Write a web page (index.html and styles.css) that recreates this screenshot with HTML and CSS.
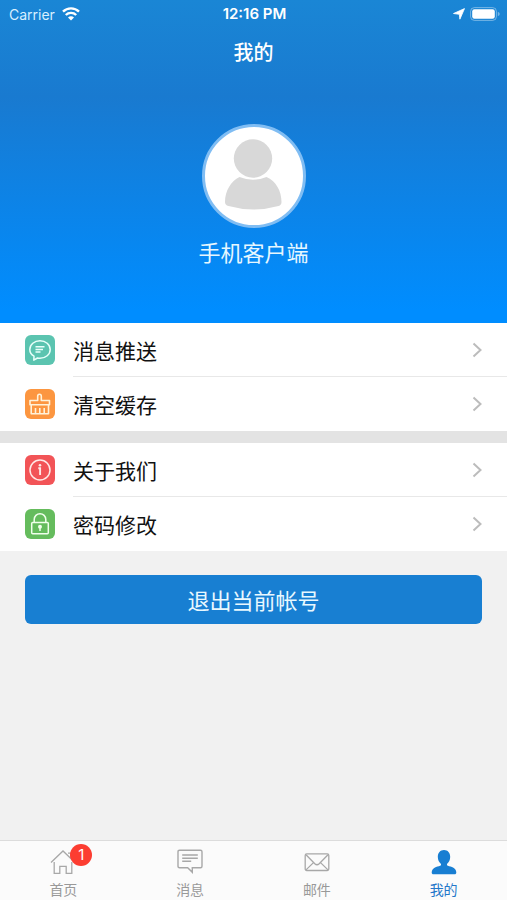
FILE: index.html
```html
<!DOCTYPE html>
<html lang="zh-CN">
<head>
<meta charset="utf-8">
<meta name="viewport" content="width=device-width, initial-scale=1">
<title>我的</title>
<link rel="stylesheet" href="styles.css">
</head>
<body>
<div class="app">
  <header class="hero">
    <div class="status">
      <div class="status-left">
        <span>Carrier</span>
        <svg width="18" height="14" viewBox="0 0 18 14" fill="none" stroke="#fff" stroke-width="2.4" aria-hidden="true">
          <path d="M1 4.700a11.400 11.400 0 0 1 16 0"/>
          <path d="M3.800 8a7.400 7.400 0 0 1 10.400 0"/>
          <path d="M6 10.500a4.200 4.200 0 0 1 6 0L9 13.600z" fill="#fff" stroke="none"/>
        </svg>
      </div>
      <span class="status-time">12:16 PM</span>
      <div class="status-right">
        <svg width="12" height="12" viewBox="0 0 12 12" fill="#fff" stroke="#fff" stroke-width=".8" stroke-linejoin="round" aria-hidden="true"><path d="M11.500.6 6.900 11.200 6.300 6.300.5 5.500z"/></svg>
        <svg width="30" height="14" viewBox="0 0 30 14" aria-hidden="true">
          <rect x=".6" y=".6" width="25.800" height="12.800" rx="3.800" fill="none" stroke="#fff" stroke-opacity=".4"/>
          <rect x="2.200" y="2.200" width="22.600" height="9.600" rx="2.200" fill="#fff"/>
          <path d="M27.800 4.800q2 .8 2 2.200t-2 2.200z" fill="#fff" fill-opacity=".4"/>
        </svg>
      </div>
    </div>
    <h1 class="title">我的</h1>
    <svg class="avatar" width="104" height="104" viewBox="0 0 104 104" role="img" aria-label="头像">
      <circle cx="52" cy="52" r="50.5" fill="#fff" stroke="#80bdf3" stroke-width="3"/>
      <circle cx="51" cy="34.500" r="19.200" fill="#d8d8d8"/>
      <path d="M37.500 53q13.500 5.500 27 0C74 57 79.500 67 79.500 78q0 3-3 4-25 7-50 0-3.500-1-3.500-4C23 67 29 57 37.500 53z" fill="#d8d8d8"/>
    </svg>
    <p class="name">手机客户端</p>
  </header>

  <main class="content">
    <nav class="group">
      <a class="row" href="#push">
        <svg class="row-icon" viewBox="0 0 30 30" aria-hidden="true">
          <rect width="30" height="30" rx="6" fill="#5bc4b0"/>
          <path d="M9 21.200C6.300 19.700 4.800 17.300 4.800 14.500c0-5 4.600-8.800 10.200-8.800s10.200 3.800 10.200 8.800-4.600 8.800-10.200 8.800c-.9 0-1.700-.1-2.500-.3L8.800 25.200z" fill="none" stroke="#e8fffa" stroke-width="1.500" stroke-linejoin="round"/>
          <path d="M10.500 11.700h9M10.500 14.400h7.500M10.500 17h5" stroke="#e8fffa" stroke-width="1.500"/>
        </svg>
        <span class="row-body"><span>消息推送</span><svg class="chevron" viewBox="0 0 10 16" aria-hidden="true"><path d="m1.500 1.500 7 6.500-7 6.500"/></svg></span>
      </a>
      <a class="row" href="#cache">
        <svg class="row-icon" viewBox="0 0 30 30" aria-hidden="true">
          <rect width="30" height="30" rx="6" fill="#fc9640"/>
          <path d="M12.700 11.500V7.200q0-2 1.800-2t1.800 2v4.300h8.200v4.300H5v-4.300zM6.200 15.800v8.900h17.300v-8.900M10.500 24.500v-5.500M14.800 24.500v-5.500M19.200 24.500v-5.500" fill="none" stroke="#fff2d8" stroke-width="1.600" stroke-linejoin="round"/>
        </svg>
        <span class="row-body"><span>清空缓存</span><svg class="chevron" viewBox="0 0 10 16" aria-hidden="true"><path d="m1.500 1.500 7 6.500-7 6.500"/></svg></span>
      </a>
    </nav>
    <nav class="group">
      <a class="row" href="#about">
        <svg class="row-icon" viewBox="0 0 30 30" aria-hidden="true">
          <rect width="30" height="30" rx="6" fill="#f25457"/>
          <circle cx="15" cy="15" r="10" fill="none" stroke="#ffe9e6" stroke-width="1.500"/>
          <circle cx="15" cy="10.200" r="1.300" fill="#ffe9e6"/>
          <path d="M13.300 13.300h1.800v6.700" fill="none" stroke="#ffe9e6" stroke-width="1.900"/>
        </svg>
        <span class="row-body"><span>关于我们</span><svg class="chevron" viewBox="0 0 10 16" aria-hidden="true"><path d="m1.500 1.500 7 6.500-7 6.500"/></svg></span>
      </a>
      <a class="row" href="#password">
        <svg class="row-icon" viewBox="0 0 30 30" aria-hidden="true">
          <rect width="30" height="30" rx="6" fill="#65bc5d"/>
          <rect x="6.700" y="13.500" width="16.600" height="11.200" rx="1" fill="none" stroke="#f0ffeb" stroke-width="1.500"/>
          <path d="M9.200 13.500v-3a5.800 5.800 0 0 1 11.600 0v3" fill="none" stroke="#f0ffeb" stroke-width="1.500"/>
          <circle cx="15" cy="17.700" r="2" fill="#f0ffeb"/><path d="M15 18v4" stroke="#f0ffeb" stroke-width="1.500"/>
        </svg>
        <span class="row-body"><span>密码修改</span><svg class="chevron" viewBox="0 0 10 16" aria-hidden="true"><path d="m1.500 1.500 7 6.500-7 6.500"/></svg></span>
      </a>
    </nav>
    <button class="logout" type="button">退出当前帐号</button>
  </main>

  <nav class="tabs">
    <a class="tab" href="#home">
      <span class="tab-icon">
        <svg width="26" height="26" viewBox="0 0 26 26" fill="none" stroke="#a8a8a8" stroke-width="1.300" aria-hidden="true">
          <path d="M1 13.500 13 2l12 11.500M18 4.200h3v5.200M4.200 13v11.300h5.600v-7h6.400v7h5.600V13"/>
        </svg>
        <span class="badge">1</span>
      </span>
      <span>首页</span>
    </a>
    <a class="tab" href="#messages">
      <span class="tab-icon">
        <svg width="26" height="26" viewBox="0 0 26 26" fill="none" stroke="#a8a8a8" stroke-width="1.400" aria-hidden="true">
          <path d="M2.500 1.200h21q1.500 0 1.500 1.500v14.500q0 1.500-1.500 1.500h-8.200v4.600l-4.600-4.600H2.500Q1 18.700 1 17.200V2.700q0-1.500 1.500-1.500zM5.200 6h15.600M5.200 9.200h15.600M5.200 12.200h9"/>
        </svg>
      </span>
      <span>消息</span>
    </a>
    <a class="tab" href="#mail">
      <span class="tab-icon">
        <svg width="26" height="26" viewBox="0 0 26 26" fill="none" stroke="#a8a8a8" stroke-width="1.300" aria-hidden="true">
          <rect x="1.200" y="4.900" width="23.600" height="16.600" rx="1.500"/>
          <path d="m2 5.700 8.800 9q2.200 2 4.400 0L24 5.700M2 20.900l7.500-7.300M24 20.900l-7.500-7.300"/>
        </svg>
      </span>
      <span>邮件</span>
    </a>
    <a class="tab tab-active" href="#me" aria-current="page">
      <span class="tab-icon">
        <svg width="26" height="26" viewBox="0 0 26 26" fill="#187ed2" aria-hidden="true">
          <path d="M13 1c3.800 0 6.200 2.900 6.200 6.800 0 3-1.300 5.700-3.200 7.100v1.300c1 1 3 1.100 5 1.800 2.800 1 4.300 2.900 4.300 5.500 0 1.200-.6 1.800-1.800 1.800h-21C1.300 25.300.7 24.700.7 23.500.7 20.900 2.200 19 5 18c2-.7 4-.8 5-1.800v-1.300C8.100 13.500 6.800 10.800 6.800 7.800 6.800 3.900 9.200 1 13 1z"/>
        </svg>
      </span>
      <span>我的</span>
    </a>
  </nav>
</div>
</body>
</html>
```
FILE: styles.css
```css
* {
  box-sizing: border-box;
}

body {
  margin: 0;
  background: #f1f1f1;
  color: #111;
  font-family: Inter, "Noto Sans CJK SC", sans-serif;
}

a {
  color: inherit;
  text-decoration: none;
}

svg {
  display: block;
  flex: none;
}

.app {
  display: flex;
  flex-direction: column;
  min-height: 100vh;
}

.hero {
  display: flex;
  flex-direction: column;
  align-items: center;
  padding-bottom: 53px;
  background: linear-gradient(#1a86d5 0, #197ad0 30%, #008dff 96%);
  color: #fff;
}

.status {
  display: grid;
  grid-template-columns: 1fr auto 1fr;
  align-items: center;
  width: 100%;
  height: 28px;
  padding: 0 7px 0 9px;
  font-size: 14px;
}

.status-left,
.status-right {
  display: flex;
  align-items: center;
  gap: 5px;
}

.status-left {
  gap: 7px;
  color: #d8efff;
}

.status-right {
  justify-content: flex-end;
}

.status-time {
  font-size: 15px;
  line-height: 20px;
  font-weight: 600;
}

.title {
  margin: 0;
  font-size: 20px;
  font-weight: 500;
  line-height: 50px;
}

.avatar {
  margin-top: 46px;
}

.name {
  margin: 9px 0 0;
  font-size: 22px;
  line-height: 33px;
  color: #e6f7ff;
}

.content {
  flex: 1;
}

.group {
  background: #fff;
}

.group + .group {
  border-top: 12px solid #e3e3e3;
}

.row {
  display: flex;
  align-items: center;
  gap: 18px;
  height: 54px;
  padding-left: 25px;
  font-size: 21px;
}

.row-icon {
  width: 30px;
  height: 30px;
}

.row-body {
  display: flex;
  flex: 1;
  align-items: center;
  justify-content: space-between;
  height: 100%;
  padding-right: 25px;
  border-bottom: 1px solid #e8e8e8;
}

.row:last-child .row-body {
  border-bottom-color: transparent;
}

.chevron {
  width: 10px;
  height: 16px;
  fill: none;
  stroke: #bcbcbc;
  stroke-width: 2;
}

.logout {
  display: block;
  width: calc(100% - 50px);
  height: 49px;
  margin: 24px 25px;
  padding: 0 0 2px;
  border: 0;
  border-radius: 6px;
  background: #187fd2;
  color: #e8f8ff;
  font: inherit;
  font-size: 22px;
}

.tabs {
  display: grid;
  grid-template-columns: repeat(4, 1fr);
  height: 60px;
  border-top: 1px solid #dcdcdc;
  background: #fbfbfb;
}

.tab {
  display: flex;
  flex-direction: column;
  align-items: center;
  gap: 5px;
  padding-top: 8px;
  color: #999;
  font-size: 14px;
  line-height: 20px;
}

.tab-icon {
  position: relative;
}

.tab-active {
  color: #2377c9;
}

.badge {
  position: absolute;
  top: -5px;
  left: 20px;
  width: 22px;
  height: 22px;
  border-radius: 50%;
  background: #fc3d31;
  color: #fff;
  font-size: 15px;
  line-height: 22px;
  text-align: center;
}
```
